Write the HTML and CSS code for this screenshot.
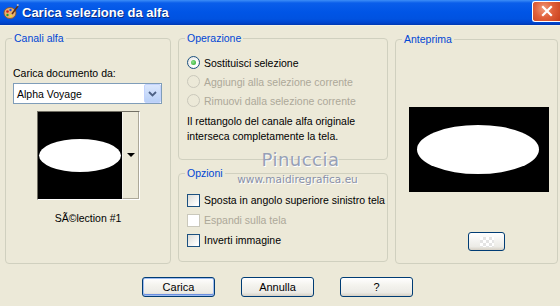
FILE: index.html
```html
<!DOCTYPE html>
<html>
<head>
<meta charset="utf-8">
<link rel="stylesheet" href="styles.css">
</head>
<body>
<div class="window">
  <div class="titlebar">
    <svg class="appicon" width="16" height="16" viewBox="0 0 16 16">
      <ellipse cx="7" cy="9" rx="6" ry="5.5" fill="#e8b070" stroke="#8a5020" stroke-width="0.8"/>
      <circle cx="4.5" cy="7.5" r="1.3" fill="#d02020"/>
      <circle cx="7.5" cy="6" r="1.2" fill="#2050e0"/>
      <circle cx="4.5" cy="11" r="1.2" fill="#20a030"/>
      <circle cx="8" cy="12" r="1.1" fill="#f0e020"/>
      <path d="M9 10 L15 2" stroke="#603010" stroke-width="1.6"/>
      <path d="M14 1.5 L15.5 0.5" stroke="#c0c0c0" stroke-width="1.6"/>
    </svg>
    <span class="title">Carica selezione da alfa</span>
    <div class="closebtn">
      <svg width="12" height="12" viewBox="0 0 12 12"><path d="M2 2 L10 10 M10 2 L2 10" stroke="#fff" stroke-width="2.2" stroke-linecap="square"/></svg>
    </div>
  </div>
  <div class="content">
    <div class="columns">
      <div class="group g-canali">
        <span class="legend">Canali alfa</span>
        <div class="label">Carica documento da:</div>
        <div class="select">
          <span class="select-text">Alpha Voyage</span>
          <span class="select-btn">
            <svg width="9" height="6" viewBox="0 0 9 6"><path d="M1 1 L4.5 4.5 L8 1" fill="none" stroke="#4d6185" stroke-width="1.8"/></svg>
          </span>
        </div>
        <div class="thumb">
          <div class="thumb-img"><div class="ellipse e-small"></div></div>
          <div class="thumb-side"><span class="tri"></span></div>
        </div>
        <div class="caption">SÃ©lection #1</div>
      </div>
      <div class="midcol">
        <div class="group g-op">
          <span class="legend">Operazione</span>
          <div class="opt"><span class="radio checked"></span><span>Sostituisci selezione</span></div>
          <div class="opt disabled"><span class="radio"></span><span>Aggiungi alla selezione corrente</span></div>
          <div class="opt disabled"><span class="radio"></span><span>Rimuovi dalla selezione corrente</span></div>
          <p class="note">Il rettangolo del canale alfa originale<br>interseca completamente la tela.</p>
        </div>
        <div class="group g-opt">
          <span class="legend">Opzioni</span>
          <div class="opt"><span class="check"></span><span>Sposta in angolo superiore sinistro tela</span></div>
          <div class="opt disabled"><span class="check"></span><span>Espandi sulla tela</span></div>
          <div class="opt"><span class="check"></span><span>Inverti immagine</span></div>
        </div>
      </div>
      <div class="group g-prev">
        <span class="legend">Anteprima</span>
        <div class="preview"><div class="ellipse e-big"></div></div>
        <div class="smallbtn"><span class="checker"></span></div>
      </div>
    </div>
    <div class="buttons">
      <div class="btn default">Carica</div>
      <div class="btn">Annulla</div>
      <div class="btn">?</div>
    </div>
    <div class="watermark">
      <div class="wm-name">Pinuccia</div>
      <div class="wm-url">www.maidiregrafica.eu</div>
    </div>
  </div>
</div>
</body>
</html>
```
FILE: styles.css
```css
* { box-sizing: border-box; }
html, body { margin: 0; padding: 0; }
body {
  width: 560px; height: 306px; overflow: hidden;
  background: #ece9d8;
  font-family: "Liberation Sans", Arial, sans-serif;
  font-size: 10.5px; color: #000;
}
.window { width: 560px; height: 306px; display: flex; flex-direction: column; }
.titlebar {
  height: 25px; flex: none;
  display: flex; align-items: center;
  padding-left: 3px;
  background: linear-gradient(to bottom, #3d8ef7 0px, #0a5eea 3px, #0055e6 12px, #0052e0 19px, #0044cc 23px, #0038b0 25px);
}
.appicon { margin-right: 3px; margin-top: -2px; }
.title {
  color: #fff; font-weight: bold; font-size: 13px;
  text-shadow: 1px 1px 0 #0a2a80;
  margin-top: -1px;
}
.closebtn {
  margin-left: auto; margin-right: 0;
  width: 28px; height: 21px;
  margin-top: -3px;
  border: 1px solid #fff; border-right: none;
  border-radius: 3px 0 0 3px;
  background: radial-gradient(circle at 40% 35%, #f09a7a 0%, #e0603a 45%, #c8401c 100%);
  display: flex; align-items: center; justify-content: center;
}
.content { position: relative; flex: 1; border-top: 1px solid #f3f1e6; }
.columns {
  display: flex; column-gap: 7px;
  padding: 12px 2px 0 5px;
}
.group {
  position: relative;
  border: 1px solid #d0d0bf;
  border-radius: 4px;
}
.legend {
  position: absolute; top: -8px; left: 6px;
  padding: 0 2px;
  background: #ece9d8;
  color: #0046d5;
  line-height: 14px;
}
.g-canali {
  width: 166px; height: 226px;
  padding: 27px 0 0 7px;
  display: flex; flex-direction: column;
}
.label { line-height: 14px; height: 17px; }
.select {
  width: 149px; height: 21px;
  border: 1px solid #7f9db9; background: #fff;
  display: flex; align-items: center;
  padding-left: 3px;
}
.select-text { flex: 1; }
.select-btn {
  width: 17px; height: 19px; margin-right: 0px;
  background: linear-gradient(to bottom, #dbe7fd, #b9d0f7);
  border: 1px solid #c3d3fd; border-radius: 2px;
  display: flex; align-items: center; justify-content: center;
}
.thumb {
  margin: 7px 0 0 24px;
  width: 103px; height: 89px;
  display: flex;
  border: 1px solid #fff;
  border-left-color: #716f64; border-top-color: #716f64;
}
.thumb-img {
  width: 84px; height: 87px;
  background: #000; border: 1px solid #000;
  display: flex; align-items: center; justify-content: center;
}
.thumb-side {
  flex: 1; background: #ece9d8;
  border-left: 1px solid #f5f4ee;
  border-right: 1px solid #aca899;
  border-bottom: 1px solid #aca899;
  display: flex; align-items: center; justify-content: center;
}
.tri {
  width: 0; height: 0;
  border-left: 4px solid transparent; border-right: 4px solid transparent;
  border-top: 4px solid #000;
  margin-left: 1px;
}
.ellipse { background: #fff; border-radius: 50%; }
.e-small { width: 82px; height: 33px; margin-top: 0; }
.caption { margin: 11px 0 0 -7px; text-align: center; line-height: 14px; }
.midcol { display: flex; flex-direction: column; row-gap: 13px; }
.g-op { width: 210px; height: 122px; padding: 14px 0 0 8px; }
.g-opt { width: 210px; height: 89px; padding: 16px 0 0 8px; }
.opt { display: flex; align-items: center; height: 19px; }
.g-opt .opt { height: 20px; }
.opt.disabled { color: #aca899; }
.radio {
  width: 13px; height: 13px; border-radius: 50%;
  border: 1px solid #1c5180;
  background: radial-gradient(circle at 60% 60%, #fff 30%, #dcdcd7 100%);
  margin-right: 4px; flex: none;
  display: flex; align-items: center; justify-content: center;
}
.radio.checked::after {
  content: ""; width: 5px; height: 5px; border-radius: 50%;
  background: radial-gradient(circle at 40% 40%, #8fe68f, #21a121);
}
.opt.disabled .radio { border-color: #cac8bb; background: #ece9d8; }
.check {
  width: 13px; height: 13px;
  border: 1px solid #1c5180;
  background: linear-gradient(135deg, #dcdcd7 0%, #fff 85%);
  margin-right: 4px; flex: none;
}
.opt.disabled .check { border-color: #cac8bb; background: #fff; }
.note { margin: 4px 0 0 0; line-height: 15px; }
.g-prev {
  width: 163px; height: 225px; margin-top: 1px;
  padding: 67px 0 0 13px;
}
.preview {
  width: 140px; height: 85px; background: #000;
  display: flex; align-items: center; justify-content: center;
}
.e-big { width: 122px; height: 49px; margin-left: -3px; }
.smallbtn {
  margin: 40px 0 0 59px;
  width: 37px; height: 19px;
  border: 1px solid #003c74; border-radius: 3px;
  background: linear-gradient(to bottom, #fff, #ecebe6 80%, #d6d0c5);
  display: flex; align-items: center; justify-content: center;
}
.checker {
  width: 14px; height: 10px;
  background: repeating-conic-gradient(#e4e4e4 0 25%, #fff 0 50%) 0 0/6px 6px;
}
.buttons {
  display: flex; padding: 13px 0 0 142px; column-gap: 26px;
}
.btn {
  width: 73px; height: 20px;
  border: 1px solid #003c74; border-radius: 3px;
  background: linear-gradient(to bottom, #fff 0%, #f4f3ee 40%, #ecebe6 80%, #d6d0c5 100%);
  display: flex; align-items: center; justify-content: center;
  font-size: 11px;
}
.btn.default {
  box-shadow: inset 0 0 0 1px #9fbcf0, inset 0 -1px 0 1px #6b8fe0;
}
.watermark {
  position: absolute; left: 230px; top: 123px;
  width: 135px; text-align: center;
  color: #8c96ae; pointer-events: none;
}
.wm-name {
  font-family: "DejaVu Sans", sans-serif; font-size: 18px; line-height: 22px;
  letter-spacing: 0.5px; color: #97a0b6;
  text-shadow: 1px 1px 0 #fff;
  padding-left: 6px;
}
.wm-url {
  font-family: "DejaVu Sans", sans-serif; font-size: 10.5px; line-height: 12px;
  margin-top: 2px; color: #8890a8;
  text-shadow: 1px 1px 0 #fff;
}
```
